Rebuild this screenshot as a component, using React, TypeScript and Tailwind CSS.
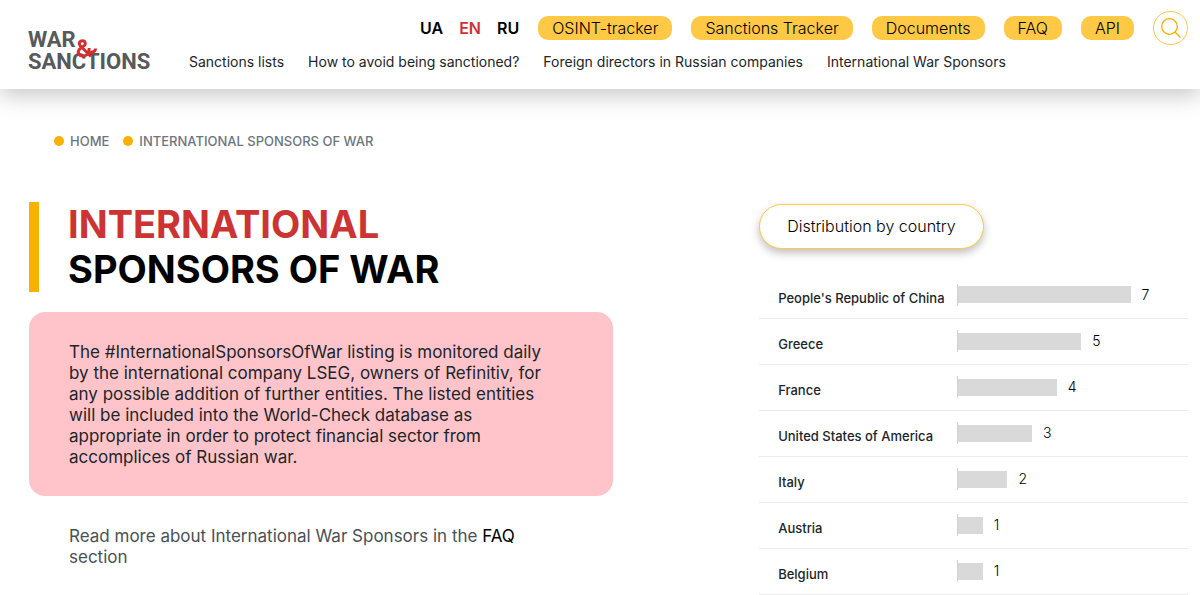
import React from 'react';

interface NavItem {
  label: string;
  href: string;
}

interface CountryCount {
  country: string;
  count: number;
}

const languages: NavItem[] = [
  { label: 'UA', href: '#ua' },
  { label: 'EN', href: '#en' },
  { label: 'RU', href: '#ru' },
];

const sections: NavItem[] = [
  { label: 'OSINT-tracker', href: '#osint-tracker' },
  { label: 'Sanctions Tracker', href: '#sanctions-tracker' },
  { label: 'Documents', href: '#documents' },
  { label: 'FAQ', href: '#faq' },
  { label: 'API', href: '#api' },
];

const pages: NavItem[] = [
  { label: 'Sanctions lists', href: '#lists' },
  { label: 'How to avoid being sanctioned?', href: '#avoid' },
  { label: 'Foreign directors in Russian companies', href: '#directors' },
  { label: 'International War Sponsors', href: '#sponsors' },
];

const countries: CountryCount[] = [
  { country: "People's Republic of China", count: 7 },
  { country: 'Greece', count: 5 },
  { country: 'France', count: 4 },
  { country: 'United States of America', count: 3 },
  { country: 'Italy', count: 2 },
  { country: 'Austria', count: 1 },
  { country: 'Belgium', count: 1 },
];

const maxCount = Math.max(...countries.map(c => c.count));

const Logo: React.FC = () => (
  <a
    href="#home"
    aria-label="War & Sanctions"
    className="relative block font-['Roboto',sans-serif] text-[22px] font-bold leading-[22px] text-[#58595b]"
  >
    <span className="block">WAR</span>
    <span className="block">SANCTIONS</span>
    <svg
      width="22"
      height="20"
      viewBox="0 0 22 20"
      className="absolute left-[48px] top-[10px]"
      fill="none"
      stroke="#d22f2f"
      strokeWidth="3"
    >
      <path d="M15 17.500 L4.500 7 C2 4 4 1.800 6.500 1.800 C9.500 1.800 10.200 5.500 7.800 7 L4.500 9.200 C0.500 12 2.500 17 7 17 C11 17 13 14 13.200 9" />
      <path d="M12 12 C14.500 14 19.500 13.500 19.500 9.500" />
    </svg>
  </a>
);

const Header: React.FC = () => (
  <header className="flex items-start bg-white pb-4 pl-7 pr-3 pt-3 shadow-[0_8px_20px_rgba(0,0,0,0.2)]">
    <div className="w-[161px] shrink-0 pt-[17px]">
      <Logo />
    </div>
    <div className="min-w-0 flex-1">
      <div className="flex h-8 items-center justify-end gap-[19px]">
        <nav aria-label="Language" className="flex gap-4">
          {languages.map(lang => (
            <a
              key={lang.label}
              href={lang.href}
              className={`text-base font-semibold ${lang.label === 'EN' ? 'text-[#cc3333]' : 'text-black'}`}
            >
              {lang.label}
            </a>
          ))}
        </nav>
        {sections.map(item => (
          <a
            key={item.label}
            href={item.href}
            className="rounded-[10px] bg-[#ffc845] px-[14px] text-base font-light leading-6 text-black"
          >
            {item.label}
          </a>
        ))}
        <button
          type="button"
          aria-label="Search"
          className="flex h-[34px] w-[35px] items-center justify-center rounded-full border border-[#ffc845]"
        >
          <svg width="20" height="20" viewBox="0 0 20 20" fill="none" stroke="#f9b000" strokeWidth="1.3">
            <circle cx="8.500" cy="8.500" r="7.800" />
            <path d="M14 14 L19.500 19.500" />
          </svg>
        </button>
      </div>
      <nav aria-label="Main" className="mt-2 flex gap-6 text-sm leading-5 text-[#212529]">
        {pages.map(item => (
          <a key={item.label} href={item.href}>{item.label}</a>
        ))}
      </nav>
    </div>
  </header>
);

const Breadcrumbs: React.FC = () => (
  <nav aria-label="Breadcrumb" className="pl-[25px] text-[13px] font-medium leading-5 text-[#6c757d]">
    <ol className="flex gap-[14px]">
      <li className="flex items-center gap-[6px]">
        <span className="size-[10px] rounded-full bg-[#f9b000]" />
        <a href="#home">HOME</a>
      </li>
      <li className="flex items-center gap-[6px]">
        <span className="size-[10px] rounded-full bg-[#f9b000]" />
        INTERNATIONAL SPONSORS OF WAR
      </li>
    </ol>
  </nav>
);

const CountryChart: React.FC = () => (
  <section>
    <button
      type="button"
      className="h-[45px] rounded-full border border-[#ffc845] bg-white px-[27px] pb-[2px] text-base font-light text-black shadow-[0_4px_8px_rgba(0,0,0,0.25)]"
    >
      Distribution by country
    </button>
    <table className="mt-[23px] w-full table-fixed border-collapse text-[#212529]">
      <tbody>
        {countries.map(({ country, count }) => (
          <tr key={country} className="h-[46px] border-b border-[#ececec]">
            <th scope="row" className="w-[198px] whitespace-nowrap pl-[19px] pt-2 text-left text-[13px] font-medium">
              {country}
            </th>
            <td>
              <div className="flex h-[22px] items-center border-l border-[#d0d0d0]">
                <div className="flex w-3/4 items-center">
                  <div
                    className="h-[17px] shrink-0 bg-[#d9d9d9]"
                    style={{ width: `${(count / maxCount) * 100}%` }}
                  />
                  <span className="pl-[11px] text-sm font-light text-black">{count}</span>
                </div>
              </div>
            </td>
          </tr>
        ))}
      </tbody>
    </table>
  </section>
);

const App: React.FC = () => {
  return (
    <div className="bg-white font-['Inter',sans-serif]">
      <Header />
      <main className="pl-[29px] pr-3 pt-[42px]">
        <Breadcrumbs />
        <div className="mt-[51px] flex items-start justify-between gap-8">
          <div className="min-w-0 max-w-[584px] flex-1">
            <h1 className="border-l-[10px] border-[#f9b000] pl-[29px] text-[38px] font-bold leading-[45px] text-black">
              <span className="block text-[#cc3333]">INTERNATIONAL</span>
              SPONSORS OF WAR
            </h1>
            <p className="mt-5 rounded-2xl bg-[#ffc4ca] pb-[28px] pl-10 pr-16 pt-[30px] text-[17px] leading-[21px] text-[#212529]">
              The #InternationalSponsorsOfWar listing is monitored daily by the international company LSEG, owners of
              Refinitiv, for any possible addition of further entities. The listed entities will be included into the
              World-Check database as appropriate in order to protect financial sector from accomplices of Russian war.
            </p>
            <p className="mt-[30px] pl-10 pr-16 text-[17px] leading-[21px] text-[#495057]">
              Read more about International War Sponsors in the{' '}
              <a href="#faq" className="text-black">FAQ</a> section
            </p>
          </div>
          <div className="w-[37%] pt-[2px]">
            <CountryChart />
          </div>
        </div>
      </main>
    </div>
  );
};

export default App;
